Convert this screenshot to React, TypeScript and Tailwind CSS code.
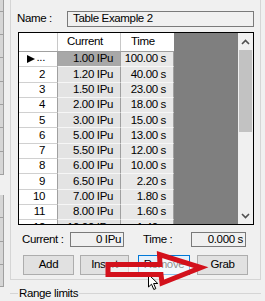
import React from "react";

const rows: [string, string, string][] = [
  ["", "1.00 IPu", "100.00 s"],
  ["2", "1.20 IPu", "40.00 s"],
  ["3", "1.50 IPu", "23.00 s"],
  ["4", "2.00 IPu", "18.00 s"],
  ["5", "3.00 IPu", "15.00 s"],
  ["6", "5.00 IPu", "13.00 s"],
  ["7", "5.50 IPu", "12.00 s"],
  ["8", "6.00 IPu", "10.00 s"],
  ["9", "6.50 IPu", "2.20 s"],
  ["10", "7.00 IPu", "1.80 s"],
  ["11", "8.00 IPu", "1.60 s"],
  ["12", "10.00 IPu", "1.40 s"],
];

// partial toolbar column at the far left
const strip = [12, 23, 23, 24, 23, 23, 24, 23, 20, 23, 24, 23, 22];

function Btn({ label, className }: { label: string; className: string }) {
  return (
    <div className={`flex h-[20px] items-center justify-center border ${className}`}>
      {label}
    </div>
  );
}

export default function App() {
  return (
    <div className="relative flex h-[301px] w-[265px] overflow-hidden whitespace-nowrap bg-[#f0f0f0] font-['Liberation_Sans',Arial,sans-serif] text-[11.5px] leading-none tracking-[-0.35px] text-black">
      <div className="flex w-[4px] flex-col">
        {strip.map((h, i) => (
          <div
            key={i}
            style={{ height: h }}
            className={i === 8 ? "" : "border-b border-r border-[#a0a0a0] bg-[#d6d6d6]"}
          />
        ))}
      </div>

      <div className="ml-[6px] flex w-[251px] flex-col">
        {/* group box */}
        <div className="flex h-[286px] flex-col border-x border-b border-[#d5d5d5]">
          <div className="mt-[11px] flex h-[16px] items-center">
            <span className="ml-[6px] w-[50px]">Name :</span>
            <div className="flex h-[16px] w-[187px] items-center border border-[#7a7a7a] pl-[5px]">
              Table Example 2
            </div>
          </div>

          <div className="ml-[7px] mt-[5px] flex h-[193px] w-[236px] overflow-hidden border border-black">
            <div className="flex w-[155px] flex-col overflow-hidden">
              <div className="flex h-[19px] shrink-0 border-b border-[#a0a0a0] bg-white">
                <div className="w-[39px] border-r border-[#c8c8c8]" />
                <div className="flex w-[63px] items-center border-r border-[#c8c8c8] pl-[9px]">Current</div>
                <div className="flex w-[53px] items-center pl-[10px]">Time</div>
              </div>
              {rows.map(([n, cur, time], i) => (
                <div key={i} className="flex h-[15.3px] shrink-0">
                  <div className="flex w-[39px] items-center justify-end overflow-hidden border-b border-r border-[#a0a0a0] border-b-[#d0d0d0] bg-white pr-[12px]">
                    {i === 0 ? (
                      <span className="flex items-center">
                        <svg width="8" height="8" viewBox="0 0 8 8" className="mr-[1px]">
                          <path d="M0 0 L8 4 L0 8 Z" fill="#000" />
                        </svg>
                        <span className="mt-[-3px]">...</span>
                      </span>
                    ) : (
                      n
                    )}
                  </div>
                  <div
                    className={`flex w-[63px] items-center justify-end overflow-hidden border-b border-r border-[#a0a0a0] border-b-[#f6f6f6] pr-[7px] ${
                      i === 0 ? "bg-[#a8a8a8]" : "bg-[#e3e3e3]"
                    }`}
                  >
                    {cur}
                  </div>
                  <div className="flex w-[53px] items-center justify-end overflow-hidden border-b border-r border-[#a0a0a0] border-b-[#f6f6f6] bg-[#e8e8e8] pr-[7px]">
                    {time}
                  </div>
                </div>
              ))}
            </div>
            <div className="w-[64px] bg-[#7f7f7f]" />
            <div className="flex w-[15px] flex-col bg-[#f0f0f0]">
              <div className="flex h-[17px] items-center justify-center">
                <svg width="9" height="6" viewBox="0 0 9 6">
                  <path d="M1 5 L4.5 1.5 L8 5" stroke="#505050" strokeWidth="1.6" fill="none" />
                </svg>
              </div>
              <div className="mx-[1px] h-[82px] bg-[#c2c2c2]" />
              <div className="flex-1" />
              <div className="flex h-[17px] items-center justify-center">
                <svg width="9" height="6" viewBox="0 0 9 6">
                  <path d="M1 1 L4.5 4.5 L8 1" stroke="#505050" strokeWidth="1.6" fill="none" />
                </svg>
              </div>
            </div>
          </div>

          <div className="mt-[7px] flex h-[15px] items-center">
            <span className="ml-[11px] w-[48px]">Current :</span>
            <div className="flex h-[15px] w-[54px] items-center justify-end border border-[#7a7a7a] pr-[2px]">0 IPu</div>
            <span className="ml-[19px] w-[48px]">Time :</span>
            <div className="flex h-[15px] w-[55px] items-center justify-end border border-[#7a7a7a] pr-[2px]">0.000 s</div>
          </div>

          <div className="mt-[8px] flex">
            <Btn label="Add" className="ml-[12px] w-[51px] border-[#adadad] bg-[#e1e1e1]" />
            <Btn label="Insert" className="ml-[6px] w-[49px] border-[#adadad] bg-[#e1e1e1]" />
            <Btn label="Remove" className="ml-[9px] w-[52px] border-[#0078d7] bg-[#e5f1fb]" />
            <Btn label="Grab" className="ml-[7px] w-[51px] border-[#adadad] bg-[#e1e1e1]" />
          </div>
        </div>

        {/* next group box, cut off */}
        <div className="mt-[6px] flex h-[15px] items-center">
          <div className="h-px w-[8px] bg-[#d5d5d5]" />
          <span className="px-[1px]">Range limits</span>
          <div className="h-px flex-1 bg-[#d5d5d5]" />
        </div>
      </div>

      {/* mouse cursor */}
      <svg className="absolute left-[148px] top-[274px]" width="12" height="17" viewBox="0 0 12 17">
        <path d="M0.5 0.5 L0.5 13 L3.5 10.2 L5.8 15.5 L7.8 14.6 L5.6 9.5 L9.8 9.5 Z" fill="#fff" stroke="#000" strokeWidth="1" />
      </svg>

      {/* red annotation arrow */}
      <svg className="pointer-events-none absolute left-0 top-0" width="265" height="301" viewBox="0 0 265 301">
        <polygon
          points="108,264.5 160,264.5 159.5,254.5 201,267.5 162,283 161,274.5 108,274.5"
          fill="rgba(255,255,255,0.55)"
          stroke="#d3111c"
          strokeWidth="5"
          strokeLinejoin="miter"
        />
      </svg>
    </div>
  );
}
